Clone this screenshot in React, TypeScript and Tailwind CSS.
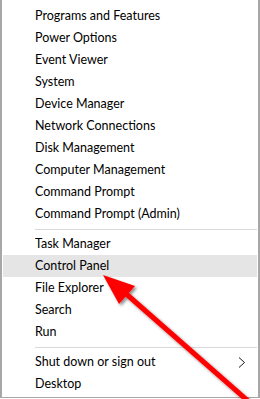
const items1 = [
  'Programs and Features',
  'Power Options',
  'Event Viewer',
  'System',
  'Device Manager',
  'Network Connections',
  'Disk Management',
  'Computer Management',
  'Command Prompt',
  'Command Prompt (Admin)',
]

const items2 = ['Task Manager', 'Control Panel', 'File Explorer', 'Search', 'Run']

function Item({ label, active, submenu }: { label: string; active?: boolean; submenu?: boolean }) {
  return (
    <div className={`flex h-[22px] items-center pl-[32px] pr-[10px] ${active ? 'bg-[#e5e5e5]' : ''}`}>
      <span className="flex-1 pt-px">{label}</span>
      {submenu && (
        <svg width="8" height="11" viewBox="0 0 8 11" className="mr-[1px]">
          <path d="M1 0.5 L6.5 5.5 L1 10.5" fill="none" stroke="#1a1a1a" strokeWidth="1" />
        </svg>
      )}
    </div>
  )
}

function Separator() {
  return (
    <div className="flex h-[8px] items-center pl-[32px]">
      <div className="h-px w-full bg-[#d9d9d9]" />
    </div>
  )
}

export default function App() {
  return (
    <div className="relative h-[399px] w-[260px] overflow-hidden bg-white">
      {/* Menu */}
      <div className="h-[398px] border-x-2 border-b border-[#a7a7a7] bg-white px-px pt-[5px] font-['Lato','Noto_Sans',sans-serif] text-[12.5px] text-black">
        {items1.map((l) => (
          <Item key={l} label={l} />
        ))}
        <Separator />
        {items2.map((l) => (
          <Item key={l} label={l} active={l === 'Control Panel'} />
        ))}
        <Separator />
        <Item label="Shut down or sign out" submenu />
        <Item label="Desktop" />
      </div>

      {/* Red arrow annotation */}
      <svg className="absolute inset-0" width="260" height="399" viewBox="0 0 260 399">
        <defs>
          <filter id="sh" x="-20%" y="-20%" width="140%" height="140%">
            <feGaussianBlur in="SourceAlpha" stdDeviation="1.5" />
            <feOffset dx="2" dy="2" result="b" />
            <feFlood floodColor="#000" floodOpacity="0.45" />
            <feComposite in2="b" operator="in" />
            <feMerge>
              <feMergeNode />
              <feMergeNode in="SourceGraphic" />
            </feMerge>
          </filter>
        </defs>
        <g filter="url(#sh)">
          <line x1="124" y1="292" x2="256" y2="408" stroke="#ff0000" strokeWidth="5" />
          <polygon points="103,275 135,286 119,304" fill="#ff0000" />
        </g>
      </svg>
    </div>
  )
}
